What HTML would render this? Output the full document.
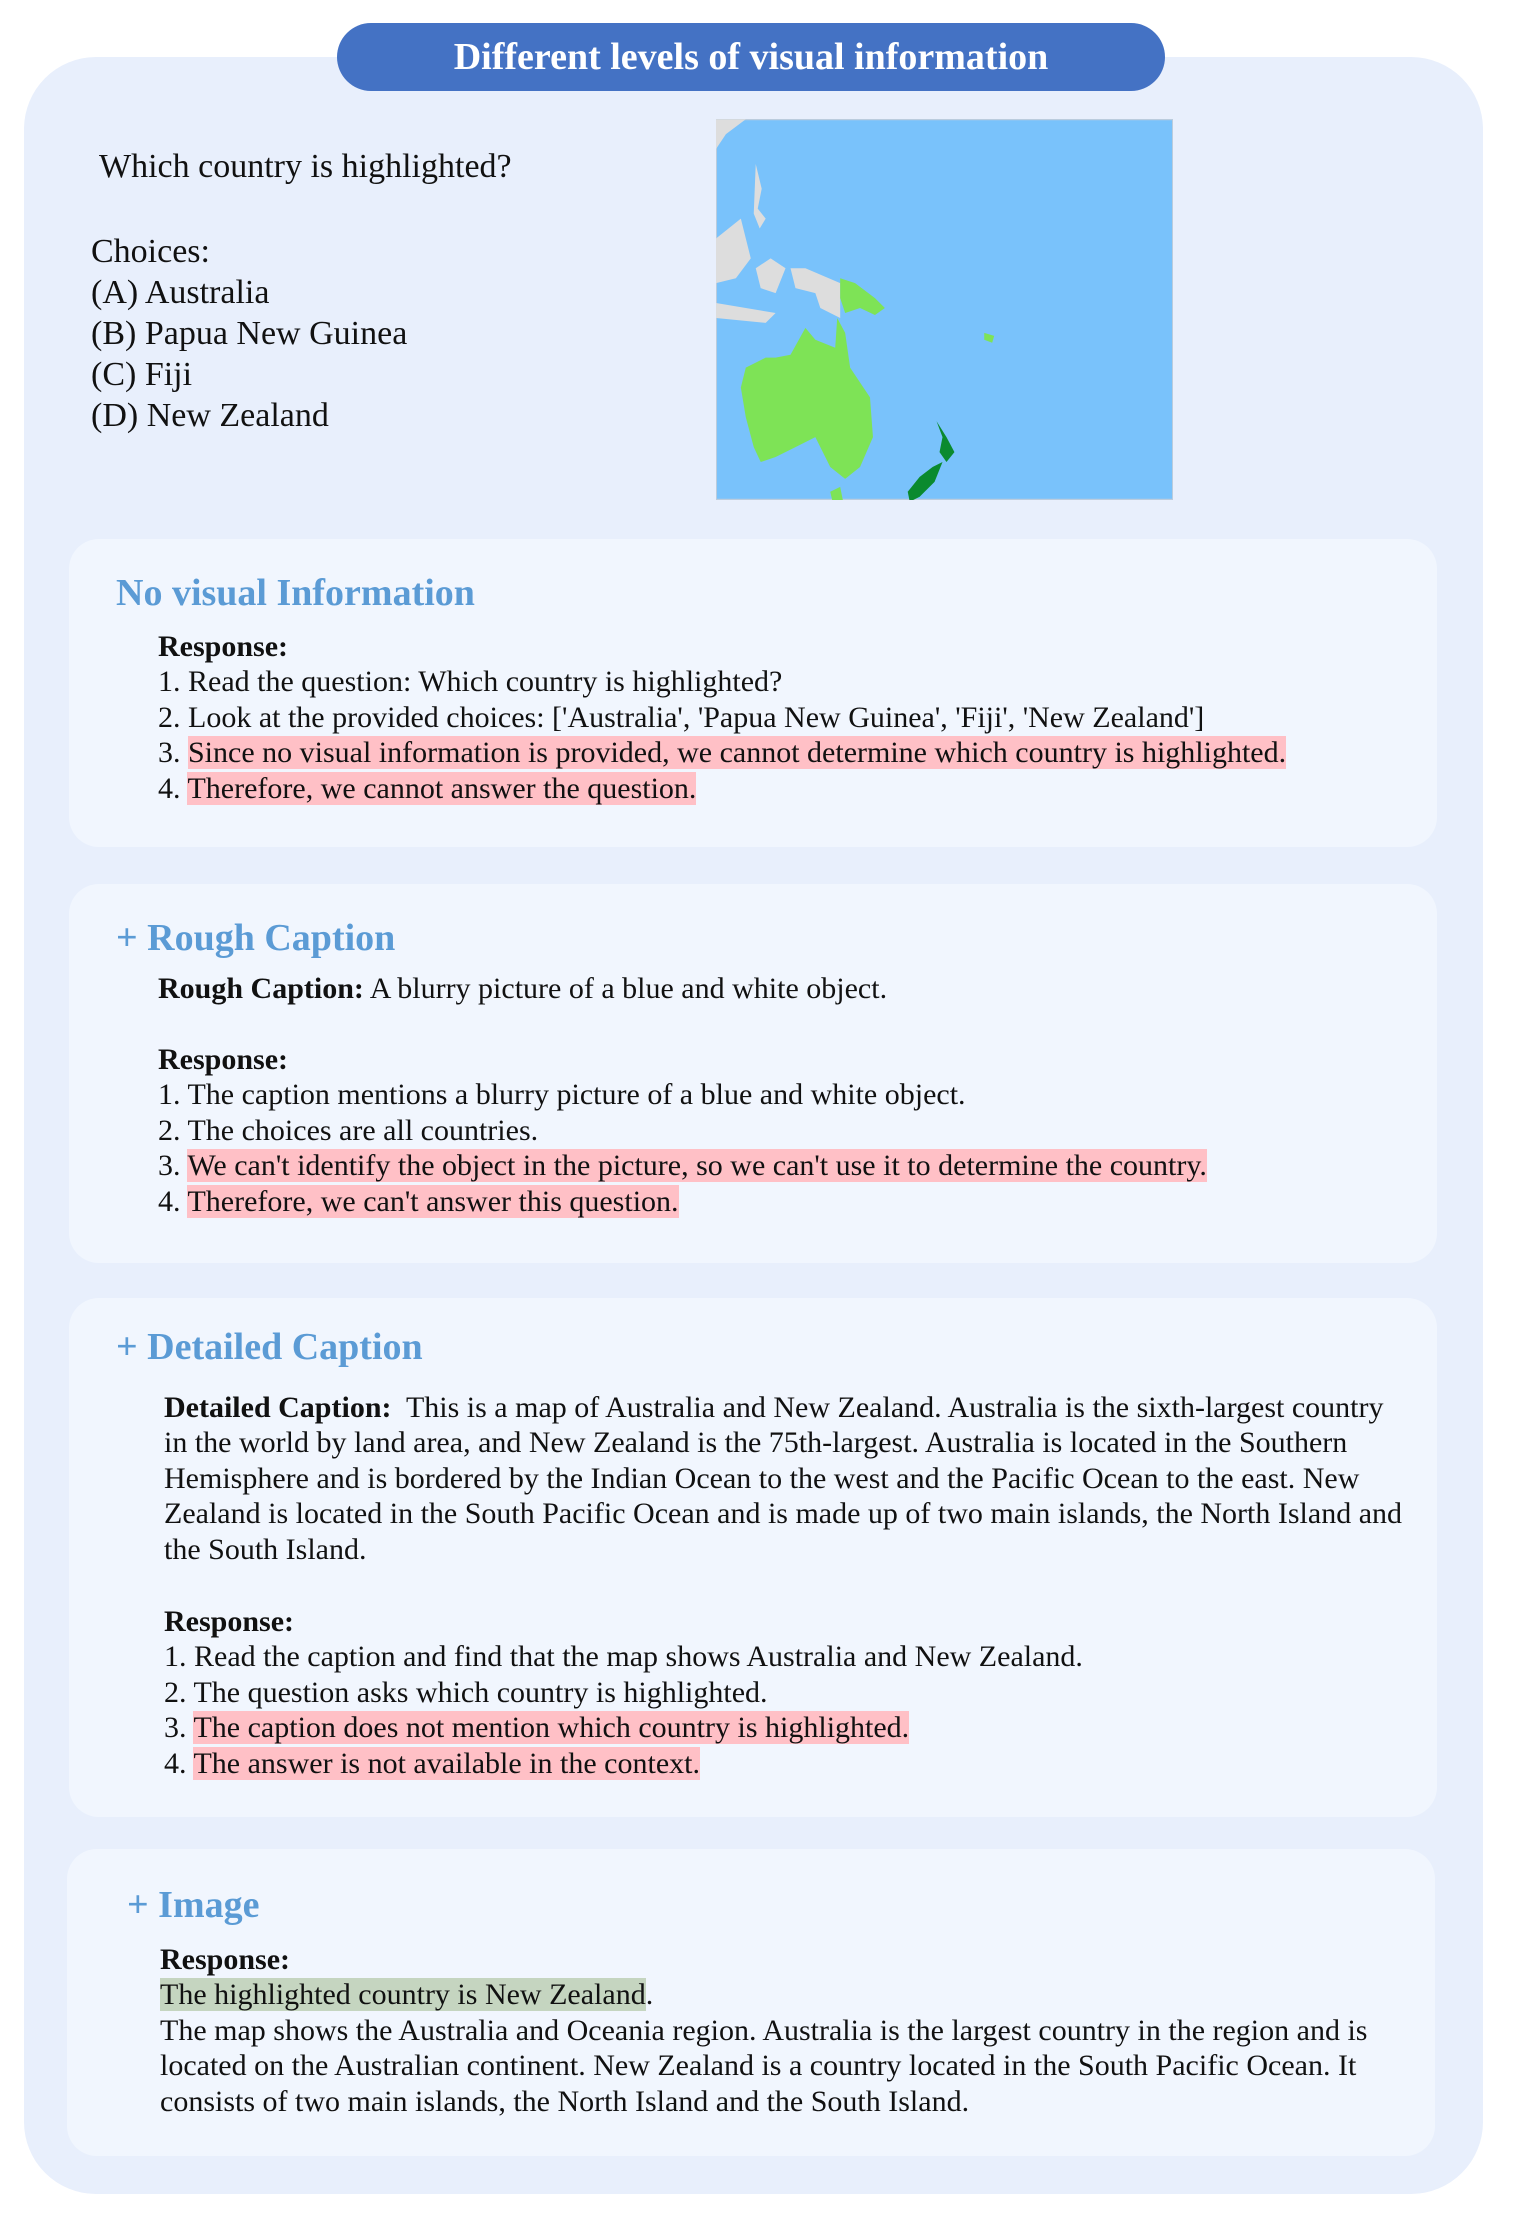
<!DOCTYPE html>
<html><head><meta charset="utf-8">
<style>
html,body{margin:0;padding:0;background:#fff;}
body{width:1522px;height:2217px;position:relative;overflow:hidden;font-family:"Liberation Serif",serif;color:#111;}
.outer{position:absolute;left:24px;top:57px;width:1459px;height:2137px;background:#e8effc;border-radius:72px;}
.pill{position:absolute;left:337px;top:23px;width:828px;height:68px;background:#4472c4;border-radius:34px;color:#fff;font-weight:bold;font-size:38px;line-height:68px;text-align:center;}
.card{position:absolute;background:#f1f6fe;border-radius:30px;}
.t{position:absolute;white-space:nowrap;}
.h{font-size:38px;font-weight:bold;color:#5b9bd5;line-height:52px;}
.p{font-size:30px;line-height:35.4px;}
.q{font-size:34px;line-height:41px;}
.r{background:#ffc0c6;}
.g{background:#c5d5c0;}
</style></head><body>
<div class="outer"></div>
<div class="pill">Different levels of visual information</div>

<div class="t q" style="left:99px;top:146px;">Which country is highlighted?</div>
<div class="t q" style="left:91px;top:231px;">Choices:<br>(A) Australia<br>(B) Papua New Guinea<br>(C) Fiji<br>(D) New Zealand</div>

<svg style="position:absolute;left:716px;top:119px;" width="457" height="381" viewBox="0 0 460 383">
<rect x="0" y="0" width="460" height="383" fill="#79c2fb" stroke="#bcd" stroke-width="2"/>
<path d="M0 0 L30 0 L10 15 L0 30Z" fill="#ddd"/>
<path d="M40 45 L46 70 L42 90 L50 100 L44 110 L38 95 Z" fill="#ddd"/>
<path d="M0 120 L25 100 L35 140 L20 160 L0 165Z" fill="#ddd"/>
<path d="M40 150 L55 140 L70 150 L60 175 L45 170Z" fill="#ddd"/>
<path d="M0 185 L30 190 L60 195 L50 205 L0 200Z" fill="#ddd"/>
<path d="M75 150 L90 150 L125 165 L125 200 L105 190 L100 175 L80 170Z" fill="#ddd"/>
<path d="M125 160 L140 165 L160 180 L170 190 L160 197 L145 190 L130 195 L125 180Z" fill="#7ee356"/>
<path d="M75 237 L90 210 L100 222 L120 230 L122 200 L130 215 L135 250 L155 280 L158 320 L145 350 L130 362 L115 350 L100 320 L80 330 L60 340 L45 345 L38 330 L30 300 L25 270 L30 250 L50 240 L60 240Z" fill="#7ee356"/>
<path d="M115 375 L125 370 L128 385 L118 388Z" fill="#7ee356"/>
<path d="M270 215 L280 218 L278 225 L270 222Z" fill="#7ee356"/>
<path d="M222 304 L232 320 L240 335 L232 345 L225 335 L228 320Z" fill="#0a8a2e"/>
<path d="M228 345 L220 365 L205 380 L195 385 L193 375 L205 360 L218 350Z" fill="#0a8a2e"/>
</svg>

<div class="card" style="left:69px;top:539px;width:1368px;height:308px;"></div>
<div class="t h" style="left:116px;top:567px;">No visual Information</div>
<div class="t p" style="left:158px;top:629px;"><b>Response:</b><br>1. Read the question: Which country is highlighted?<br>2. Look at the provided choices: ['Australia', 'Papua New Guinea', 'Fiji', 'New Zealand']<br>3. <span class="r">Since no visual information is provided, we cannot determine which country is highlighted.</span><br>4. <span class="r">Therefore, we cannot answer the question.</span></div>

<div class="card" style="left:69px;top:884px;width:1368px;height:379px;"></div>
<div class="t h" style="left:116px;top:912px;">+ Rough Caption</div>
<div class="t p" style="left:158px;top:971px;"><b>Rough Caption:</b> A blurry picture of a blue and white object.</div>
<div class="t p" style="left:158px;top:1042px;"><b>Response:</b><br>1. The caption mentions a blurry picture of a blue and white object.<br>2. The choices are all countries.<br>3. <span class="r">We can't identify the object in the picture, so we can't use it to determine the country.</span><br>4. <span class="r">Therefore, we can't answer this question.</span></div>

<div class="card" style="left:69px;top:1298px;width:1368px;height:519px;"></div>
<div class="t h" style="left:116px;top:1321px;">+ Detailed Caption</div>
<div class="t p" style="left:164px;top:1390px;"><b>Detailed Caption:</b>&nbsp; This is a map of Australia and New Zealand. Australia is the sixth-largest country<br>in the world by land area, and New Zealand is the 75th-largest. Australia is located in the Southern<br>Hemisphere and is bordered by the Indian Ocean to the west and the Pacific Ocean to the east. New<br>Zealand is located in the South Pacific Ocean and is made up of two main islands, the North Island and<br>the South Island.</div>
<div class="t p" style="left:164px;top:1604px;"><b>Response:</b><br>1. Read the caption and find that the map shows Australia and New Zealand.<br>2. The question asks which country is highlighted.<br>3. <span class="r">The caption does not mention which country is highlighted.</span><br>4. <span class="r">The answer is not available in the context.</span></div>

<div class="card" style="left:67px;top:1849px;width:1368px;height:307px;"></div>
<div class="t h" style="left:127px;top:1879px;">+ Image</div>
<div class="t p" style="left:160px;top:1942px;"><b>Response:</b><br><span class="g">The highlighted country is New Zealand</span>.<br>The map shows the Australia and Oceania region. Australia is the largest country in the region and is<br>located on the Australian continent. New Zealand is a country located in the South Pacific Ocean. It<br>consists of two main islands, the North Island and the South Island.</div>
</body></html>
